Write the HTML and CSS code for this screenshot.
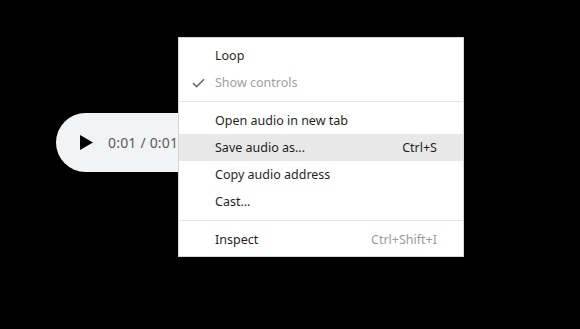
FILE: index.html
```html
<!DOCTYPE html>
<html lang="en">
<head>
    <title>Audio context menu</title>
    <meta name="viewport" content="width=device-width, initial-scale=1.0">
    <link rel="stylesheet" href="styles.css">
</head>
<body>
    <div class="player">
        <span class="play-btn">
            <svg width="13" height="15" viewBox="0 0 13 15"><path d="M0 0 L13 7.5 L0 15 Z" fill="#000"/></svg>
        </span>
        <span class="time">0:01 / 0:01</span>
    </div>

    <div class="context-menu">
        <div class="menu-item">
            <span class="check"></span>
            <span class="label">Loop</span>
        </div>
        <div class="menu-item disabled">
            <span class="check">
                <svg width="13" height="10" viewBox="0 0 13 10"><path d="M1 5.2 L4.6 8.6 L12 1.2" fill="none" stroke="#6b6b6b" stroke-width="1.6"/></svg>
            </span>
            <span class="label">Show controls</span>
        </div>
        <div class="separator"></div>
        <div class="menu-item">
            <span class="check"></span>
            <span class="label">Open audio in new tab</span>
        </div>
        <div class="menu-item active">
            <span class="check"></span>
            <span class="label">Save audio as...</span>
            <span class="shortcut">Ctrl+S</span>
        </div>
        <div class="menu-item">
            <span class="check"></span>
            <span class="label">Copy audio address</span>
        </div>
        <div class="menu-item">
            <span class="check"></span>
            <span class="label">Cast...</span>
        </div>
        <div class="separator"></div>
        <div class="menu-item">
            <span class="check"></span>
            <span class="label">Inspect</span>
            <span class="shortcut">Ctrl+Shift+I</span>
        </div>
    </div>
</body>
</html>
```

FILE: styles.css
```css
body {
    margin: 0;
    width: 580px;
    height: 329px;
    background-color: #000;
    font-family: "Noto Sans", "Open Sans", sans-serif;
    position: relative;
    overflow: hidden;
}
.player {
    margin: 113px 0 0 56px;
    width: 300px;
    height: 59px;
    border-radius: 30px;
    background-color: #f1f3f4;
    display: flex;
    align-items: center;
    padding-left: 24px;
    box-sizing: border-box;
}
.play-btn {
    display: flex;
    width: 13px;
    height: 15px;
}
.time {
    margin-left: 15px;
    font-size: 14px;
    color: #5a5a5a;
    letter-spacing: 0.2px;
}
.context-menu {
    position: absolute;
    top: 37px;
    left: 178px;
    width: 286px;
    box-sizing: border-box;
    background-color: #fff;
    border: 1px solid #d6d6d6;
    padding: 4px 0 3px;
}
.menu-item {
    height: 27px;
    display: flex;
    align-items: center;
    font-size: 12.5px;
    color: #1f1f1f;
    padding-right: 26px;
}
.menu-item.active {
    background-color: #e8e8e8;
}
.menu-item.disabled {
    color: #a0a0a0;
}
.check {
    width: 36px;
    display: flex;
    justify-content: flex-end;
    padding-right: 10px;
    box-sizing: content-box;
    margin-left: -10px;
}
.label {
    flex: 1;
}
.shortcut {
    color: #9a9a9a;
}
.menu-item.active .shortcut {
    color: #1f1f1f;
}
.separator {
    height: 1px;
    background-color: #e4e4e4;
    margin: 5px 0;
}
```
